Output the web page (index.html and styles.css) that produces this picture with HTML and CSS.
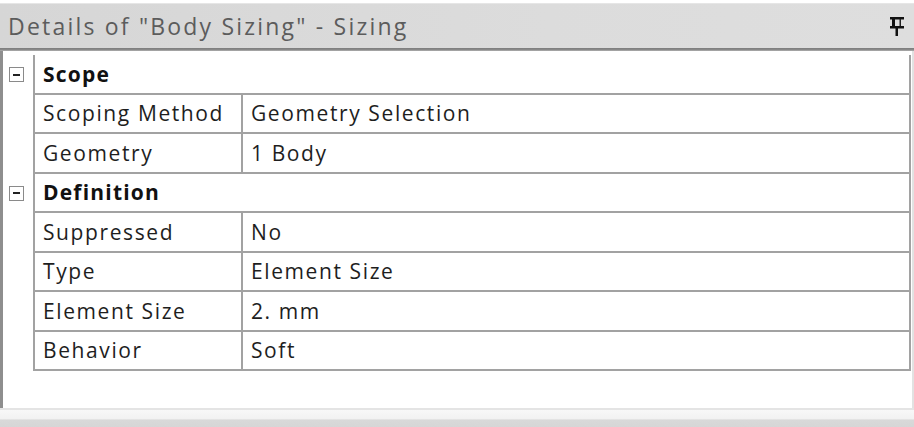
FILE: index.html
```html
<!DOCTYPE html>
<html>
<head>
<meta charset="utf-8">
<link rel="stylesheet" href="styles.css">
</head>
<body>
<div class="window">
  <div class="titlebar">
    <span class="title">Details of "Body Sizing" - Sizing</span>
    <svg class="pin" width="16" height="20" viewBox="0 0 16 20">
      <rect x="1" y="0" width="14" height="2.5" fill="#111"/>
      <rect x="3" y="2" width="3" height="8" fill="#111"/>
      <rect x="10.5" y="2" width="1.5" height="8" fill="#222"/>
      <rect x="1" y="9" width="14" height="2.5" fill="#111"/>
      <rect x="6.5" y="11" width="2.5" height="8" fill="#111"/>
    </svg>
  </div>
  <div class="sep"></div>
  <div class="panel">
    <div class="grid">
      <div class="gutter"><span class="toggle"></span></div>
      <div class="cell group">Scope</div>

      <div class="gutter"></div>
      <div class="cell label">Scoping Method</div>
      <div class="cell value">Geometry Selection</div>

      <div class="gutter"></div>
      <div class="cell label">Geometry</div>
      <div class="cell value">1 Body</div>

      <div class="gutter"><span class="toggle"></span></div>
      <div class="cell group">Definition</div>

      <div class="gutter"></div>
      <div class="cell label">Suppressed</div>
      <div class="cell value">No</div>

      <div class="gutter"></div>
      <div class="cell label">Type</div>
      <div class="cell value">Element Size</div>

      <div class="gutter"></div>
      <div class="cell label">Element Size</div>
      <div class="cell value">2. mm</div>

      <div class="gutter"></div>
      <div class="cell label">Behavior</div>
      <div class="cell value">Soft</div>
    </div>
  </div>
  <div class="footer"></div>
</div>
</body>
</html>
```
FILE: styles.css
```css
html, body {
  margin: 0;
  padding: 0;
  background: #ffffff;
}
.window {
  width: 914px;
  height: 427px;
  display: flex;
  flex-direction: column;
  font-family: "Open Sans", "Noto Sans", sans-serif;
  overflow: hidden;
}
.titlebar {
  height: 45px;
  margin-top: 3px;
  background: linear-gradient(to right, #d6d6d6, #dcdcdc 60%, #dedede);
  border-top: 1px solid #e6e6e6;
  box-sizing: border-box;
  display: flex;
  align-items: center;
  justify-content: space-between;
  padding: 0 9px 0 8px;
}
.title {
  font-size: 23px;
  color: #5c5c5c;
  letter-spacing: 2.2px;
}
.pin {
  display: block;
  margin-top: 1px;
}
.sep {
  height: 3px;
  background: linear-gradient(to bottom, #7c7c7c, #8c8c8c 66%, #b8b8b8);
}
.panel {
  height: 357px;
  border-left: 3px solid #8e8e8e;
  border-right: 2px solid #e2e2e2;
  box-sizing: border-box;
  padding-top: 4px;
}
.grid {
  display: grid;
  grid-template-columns: 30px 210px 668px;
  grid-auto-rows: 39.5px;
}
.gutter {
  display: flex;
  align-items: center;
  padding-left: 6px;
}
.toggle {
  width: 13px;
  height: 13px;
  border: 1px solid #8a8a8a;
  position: relative;
  box-sizing: content-box;
}
.toggle::after {
  content: "";
  position: absolute;
  left: 3px;
  right: 3px;
  top: 5.5px;
  height: 2px;
  background: #222;
}
.cell {
  display: flex;
  align-items: center;
  padding-left: 8px;
  box-sizing: border-box;
  border-bottom: 2px solid #a2a2a2;
  border-right: 2px solid #a2a2a2;
  font-size: 21px;
  letter-spacing: 1.6px;
  color: #1e1e1e;
}
.label {
  border-left: 2px solid #a2a2a2;
}
.group {
  grid-column: 2 / 4;
  border-left: 2px solid #a2a2a2;
  font-weight: 700;
  letter-spacing: 1.2px;
  color: #111;
}
.footer {
  flex: 1;
  border-top: 2px solid #e4e4e4;
  background: linear-gradient(to bottom, #f8f8f8, #f2f2f2 50%, #d9d9d9 60%, #d6d6d6);
}
```
